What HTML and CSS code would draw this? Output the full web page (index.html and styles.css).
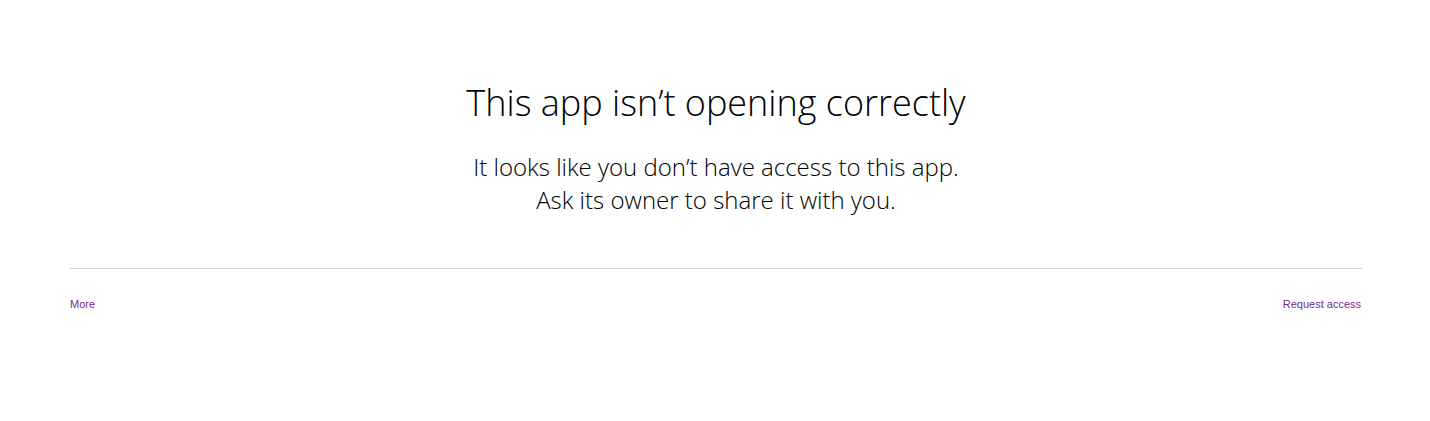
FILE: index.html
```html
<!DOCTYPE html>
<html lang="en">
<head>
<meta charset="utf-8">
<title>This app isn't opening correctly</title>
<link rel="stylesheet" href="styles.css">
</head>
<body>
<main class="page">
  <section class="message">
    <h1 class="title">This app isn’t opening correctly</h1>
    <p class="detail">It looks like you don’t have access to this app.<br>Ask its owner to share it with you.</p>
  </section>
  <hr class="divider">
  <nav class="actions">
    <a class="action" href="#">More</a>
    <a class="action action-end" href="#">Request access</a>
  </nav>
</main>
</body>
</html>
```

FILE: styles.css
```css
html, body {
  margin: 0;
  padding: 0;
  background: #ffffff;
}

.page {
  padding: 79px 68px 0 70px;
}

.message {
  display: flex;
  flex-direction: column;
  align-items: center;
  text-align: center;
  color: #000000;
  font-family: "Open Sans", "Segoe UI", sans-serif;
  font-weight: 300;
}

.title {
  margin: 0;
  font-size: 36px;
  line-height: 48px;
  font-weight: 300;
}

.detail {
  margin: 23px 0 0;
  font-size: 24px;
  line-height: 33px;
}

.divider {
  margin: 52px 0 0;
  border: 0;
  height: 1px;
  background: #d2d2d2;
}

.actions {
  display: flex;
  justify-content: space-between;
  margin-top: 27px;
  font-family: "Liberation Sans", Arial, sans-serif;
  font-size: 11px;
  line-height: 16px;
}

.action {
  color: #772a85;
  text-decoration: none;
}

.action-end {
  margin-right: 1px;
}
```
